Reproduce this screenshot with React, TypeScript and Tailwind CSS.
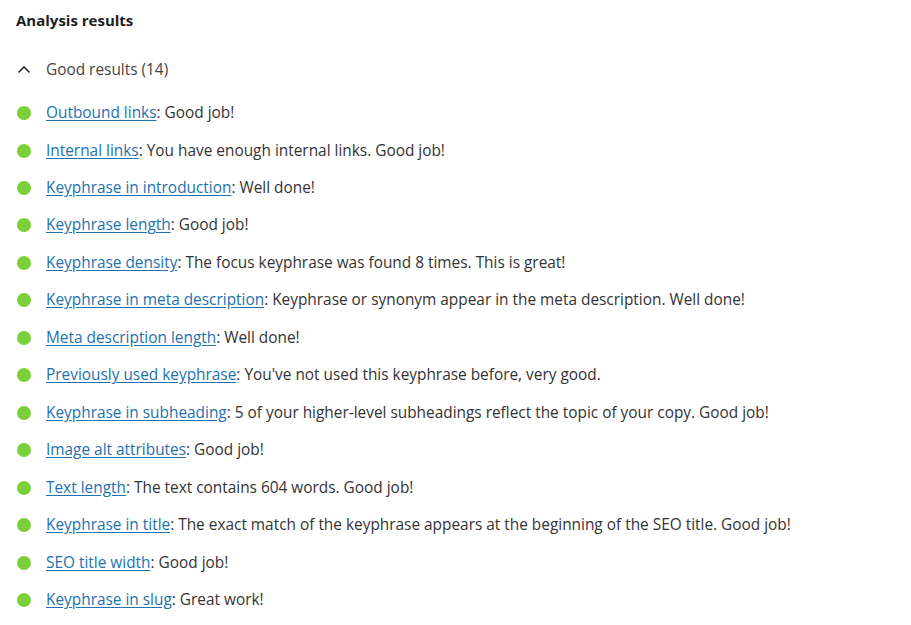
const results: { link: string; text: string }[] = [
  { link: "Outbound links", text: ": Good job!" },
  { link: "Internal links", text: ": You have enough internal links. Good job!" },
  { link: "Keyphrase in introduction", text: ": Well done!" },
  { link: "Keyphrase length", text: ": Good job!" },
  { link: "Keyphrase density", text: ": The focus keyphrase was found 8 times. This is great!" },
  { link: "Keyphrase in meta description", text: ": Keyphrase or synonym appear in the meta description. Well done!" },
  { link: "Meta description length", text: ": Well done!" },
  { link: "Previously used keyphrase", text: ": You've not used this keyphrase before, very good." },
  { link: "Keyphrase in subheading", text: ": 5 of your higher-level subheadings reflect the topic of your copy. Good job!" },
  { link: "Image alt attributes", text: ": Good job!" },
  { link: "Text length", text: ": The text contains 604 words. Good job!" },
  { link: "Keyphrase in title", text: ": The exact match of the keyphrase appears at the beginning of the SEO title. Good job!" },
  { link: "SEO title width", text: ": Good job!" },
  { link: "Keyphrase in slug", text: ": Great work!" },
];

export default function App() {
  return (
    <div
      className="min-h-screen bg-white px-4 pt-[9px] text-[#333]"
      style={{ fontFamily: '"Open Sans", "Noto Sans", Arial, sans-serif' }}
    >
      <h2 className="text-[15px] font-bold leading-[22px] text-[#1e1e1e]">Analysis results</h2>

      {/* Collapsible group header */}
      <button className="mt-[27px] flex items-center gap-[14px] text-[15.4px] text-[#444]">
        <svg width="16" height="16" viewBox="0 0 16 16" fill="none" stroke="#333" strokeWidth="1.7">
          <path d="M2.5 10.5 L8 5 L13.5 10.5" />
        </svg>
        <span>Good results (14)</span>
      </button>

      <ul className="mt-[21px]">
        {results.map((r) => (
          <li key={r.link} className="flex h-[37.46px] items-start text-[15.4px]">
            <span className="ml-[1px] mt-[4px] h-[14px] w-[14px] shrink-0 rounded-full bg-[#7ad03a]" />
            <p className="ml-[15px] leading-[22px]">
              <a href="#" className="text-[#2271b1] underline underline-offset-2">
                {r.link}
              </a>
              {r.text}
            </p>
          </li>
        ))}
      </ul>
    </div>
  );
}
